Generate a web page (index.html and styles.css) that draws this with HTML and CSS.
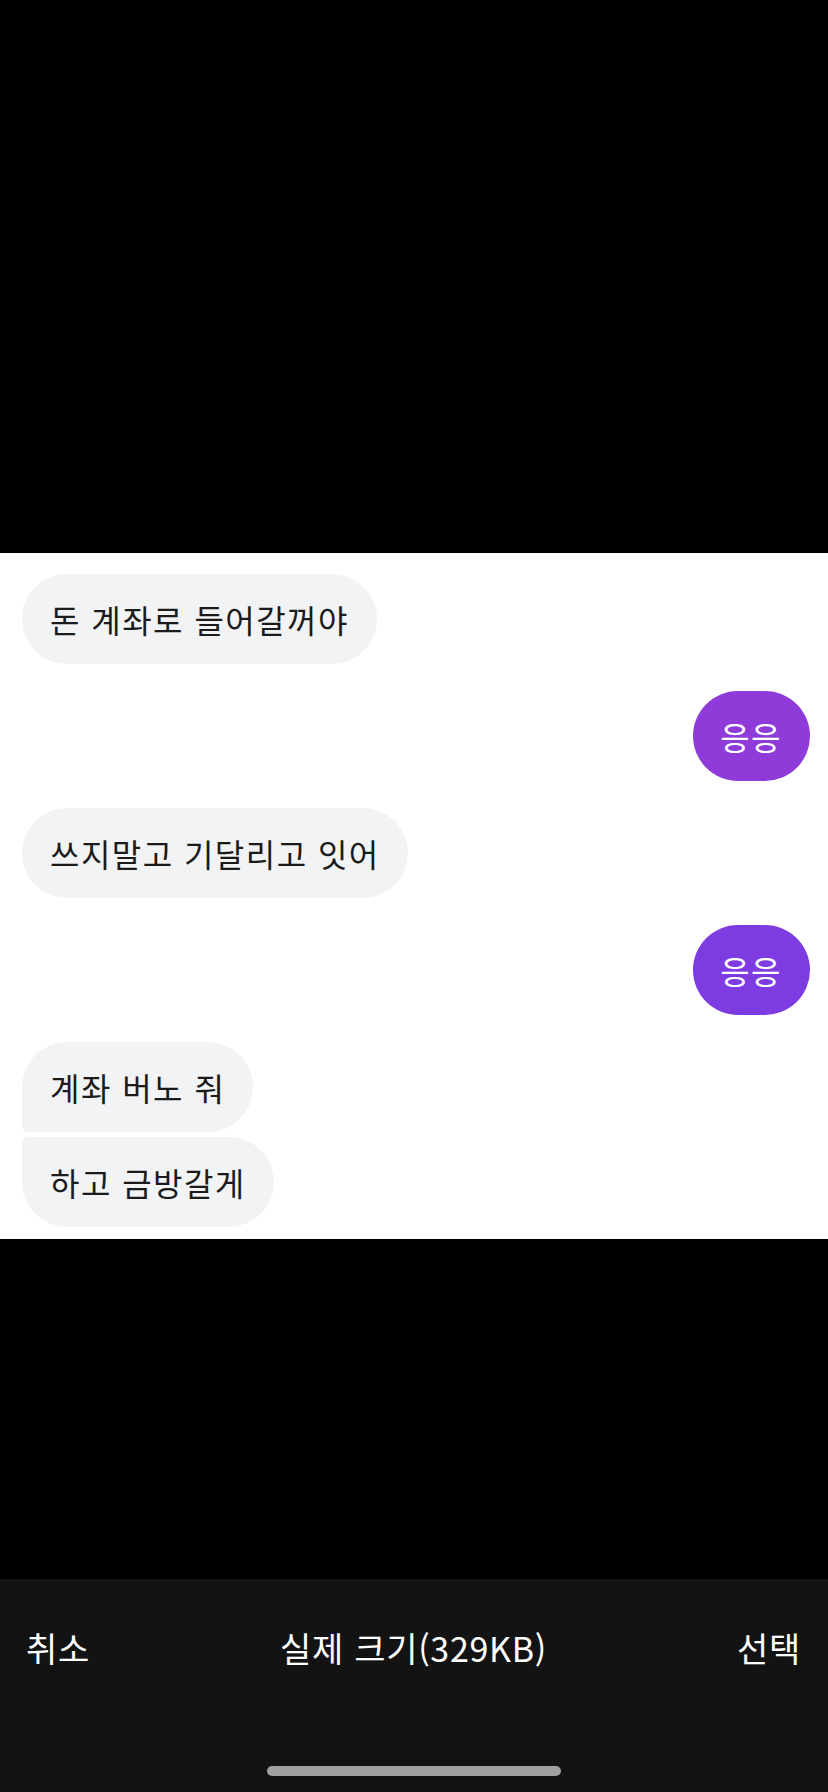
FILE: index.html
```html
<!DOCTYPE html>
<html lang="ko">
<head>
<meta charset="utf-8">
<link rel="stylesheet" href="styles.css">
</head>
<body>
<div class="screen">
  <div class="blackout top"></div>
  <div class="chat">
    <div class="row in"><div class="bubble gray">돈 계좌로 들어갈꺼야</div></div>
    <div class="row out"><div class="bubble purple p1">응응</div></div>
    <div class="row in"><div class="bubble gray">쓰지말고 기달리고 잇어</div></div>
    <div class="row out"><div class="bubble purple p2">응응</div></div>
    <div class="group">
      <div class="row in"><div class="bubble gray first">계좌 버노 줘</div></div>
      <div class="row in"><div class="bubble gray last">하고 금방갈게</div></div>
    </div>
  </div>
  <div class="blackout mid"></div>
  <div class="toolbar">
    <div class="actions">
      <span class="action">취소</span>
      <span class="action">실제 크기(329KB)</span>
      <span class="action">선택</span>
    </div>
    <div class="home-indicator"></div>
  </div>
</div>
</body>
</html>
```

FILE: styles.css
```css
html, body {
  margin: 0;
  padding: 0;
  background: #000;
}
.screen {
  width: 828px;
  height: 1792px;
  display: flex;
  flex-direction: column;
  font-family: "Noto Sans CJK KR", "Noto Sans", sans-serif;
}
.blackout {
  background: #000;
}
.blackout.top {
  height: 553px;
}
.blackout.mid {
  height: 340px;
}
.chat {
  background: #fff;
  height: 686px;
  box-sizing: border-box;
  padding: 21px 18px 12px 22px;
  display: flex;
  flex-direction: column;
  gap: 27px;
}
.group {
  display: flex;
  flex-direction: column;
  gap: 5px;
}
.row {
  display: flex;
}
.row.in {
  justify-content: flex-start;
}
.row.out {
  justify-content: flex-end;
}
.bubble {
  height: 90px;
  box-sizing: border-box;
  padding: 0 28px 0 28px;
  border-radius: 45px;
  display: flex;
  align-items: center;
  font-size: 32px;
  letter-spacing: 1.45px;
  white-space: nowrap;
}
.bubble.gray {
  background: #f2f3f5;
  color: #1b1b1b;
}
.bubble.purple {
  color: #fff;
  padding: 0 28px 0 27px;
}
.bubble.p1 {
  background: #8f3bd9;
}
.bubble.p2 {
  background: #7e3be2;
}
.bubble.first {
  border-bottom-left-radius: 6px;
}
.bubble.last {
  border-top-left-radius: 6px;
}
.toolbar {
  flex: 1;
  background: #131313;
  display: flex;
  flex-direction: column;
  align-items: center;
}
.actions {
  width: 100%;
  box-sizing: border-box;
  padding: 44px 27px 0 26px;
  height: 142px;
  display: flex;
  justify-content: space-between;
  align-items: flex-start;
}
.action {
  color: #fff;
  font-size: 34px;
  letter-spacing: 0.7px;
  line-height: 50px;
}
.home-indicator {
  margin-top: 45px;
  width: 294px;
  height: 10px;
  border-radius: 5px;
  background: #a0a0a0;
}
```
